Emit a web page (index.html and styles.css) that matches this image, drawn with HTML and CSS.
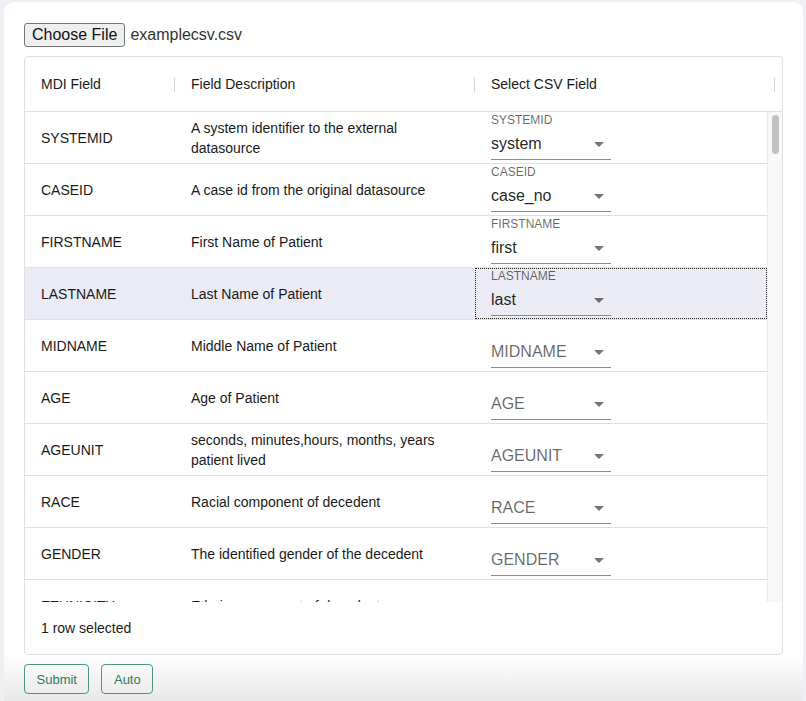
FILE: index.html
```html
<!DOCTYPE html>
<html lang="en">
<head>
<meta charset="utf-8">
<title>CSV Field Mapping</title>
<link rel="stylesheet" href="styles.css">
</head>
<body>
<div class="card">
  <div class="file-row">
    <button class="file-btn" type="button">Choose File</button>
    <span class="file-name">examplecsv.csv</span>
  </div>

  <div class="grid">
    <div class="grid-head">
      <div class="hcell c1"><span>MDI Field</span><span class="sep"></span></div>
      <div class="hcell c2"><span>Field Description</span><span class="sep"></span></div>
      <div class="hcell c3h"><span>Select CSV Field</span><span class="sep"></span></div>
    </div>

    <div class="grid-body">
      <div class="rows">
        <div class="row">
          <div class="cell c1">SYSTEMID</div>
          <div class="cell c2">A system identifier to the external datasource</div>
          <div class="cell c3">
            <div class="sel">
              <div class="sel-label">SYSTEMID</div>
              <div class="sel-box"><span class="val">system</span><svg class="arrow" viewBox="0 0 24 24"><path d="M7 10l5 5 5-5z"/></svg></div>
            </div>
          </div>
        </div>
        <div class="row">
          <div class="cell c1">CASEID</div>
          <div class="cell c2">A case id from the original datasource</div>
          <div class="cell c3">
            <div class="sel">
              <div class="sel-label">CASEID</div>
              <div class="sel-box"><span class="val">case_no</span><svg class="arrow" viewBox="0 0 24 24"><path d="M7 10l5 5 5-5z"/></svg></div>
            </div>
          </div>
        </div>
        <div class="row">
          <div class="cell c1">FIRSTNAME</div>
          <div class="cell c2">First Name of Patient</div>
          <div class="cell c3">
            <div class="sel">
              <div class="sel-label">FIRSTNAME</div>
              <div class="sel-box"><span class="val">first</span><svg class="arrow" viewBox="0 0 24 24"><path d="M7 10l5 5 5-5z"/></svg></div>
            </div>
          </div>
        </div>
        <div class="row selected">
          <div class="cell c1">LASTNAME</div>
          <div class="cell c2">Last Name of Patient</div>
          <div class="cell c3 focused">
            <div class="sel">
              <div class="sel-label">LASTNAME</div>
              <div class="sel-box"><span class="val">last</span><svg class="arrow" viewBox="0 0 24 24"><path d="M7 10l5 5 5-5z"/></svg></div>
            </div>
          </div>
        </div>
        <div class="row">
          <div class="cell c1">MIDNAME</div>
          <div class="cell c2">Middle Name of Patient</div>
          <div class="cell c3">
            <div class="sel">
              <div class="sel-label"></div>
              <div class="sel-box"><span class="ph">MIDNAME</span><svg class="arrow" viewBox="0 0 24 24"><path d="M7 10l5 5 5-5z"/></svg></div>
            </div>
          </div>
        </div>
        <div class="row">
          <div class="cell c1">AGE</div>
          <div class="cell c2">Age of Patient</div>
          <div class="cell c3">
            <div class="sel">
              <div class="sel-label"></div>
              <div class="sel-box"><span class="ph">AGE</span><svg class="arrow" viewBox="0 0 24 24"><path d="M7 10l5 5 5-5z"/></svg></div>
            </div>
          </div>
        </div>
        <div class="row">
          <div class="cell c1">AGEUNIT</div>
          <div class="cell c2">seconds, minutes,hours, months, years patient lived</div>
          <div class="cell c3">
            <div class="sel">
              <div class="sel-label"></div>
              <div class="sel-box"><span class="ph">AGEUNIT</span><svg class="arrow" viewBox="0 0 24 24"><path d="M7 10l5 5 5-5z"/></svg></div>
            </div>
          </div>
        </div>
        <div class="row">
          <div class="cell c1">RACE</div>
          <div class="cell c2">Racial component of decedent</div>
          <div class="cell c3">
            <div class="sel">
              <div class="sel-label"></div>
              <div class="sel-box"><span class="ph">RACE</span><svg class="arrow" viewBox="0 0 24 24"><path d="M7 10l5 5 5-5z"/></svg></div>
            </div>
          </div>
        </div>
        <div class="row">
          <div class="cell c1">GENDER</div>
          <div class="cell c2">The identified gender of the decedent</div>
          <div class="cell c3">
            <div class="sel">
              <div class="sel-label"></div>
              <div class="sel-box"><span class="ph">GENDER</span><svg class="arrow" viewBox="0 0 24 24"><path d="M7 10l5 5 5-5z"/></svg></div>
            </div>
          </div>
        </div>
        <div class="row">
          <div class="cell c1">ETHNICITY</div>
          <div class="cell c2">Ethnic component of decedent</div>
          <div class="cell c3">
            <div class="sel">
              <div class="sel-label"></div>
              <div class="sel-box"><span class="ph">ETHNICITY</span><svg class="arrow" viewBox="0 0 24 24"><path d="M7 10l5 5 5-5z"/></svg></div>
            </div>
          </div>
        </div>
      </div>
      <div class="vscroll"><div class="thumb"></div></div>
    </div>

    <div class="grid-foot">1 row selected</div>
  </div>

  <div class="actions">
    <button class="btn" type="button">Submit</button>
    <button class="btn" type="button">Auto</button>
  </div>
</div>
</body>
</html>
```

FILE: styles.css
```css
* {
  box-sizing: border-box;
}

html, body {
  margin: 0;
  padding: 0;
  height: 100%;
  overflow: hidden;
}

body {
  background: #eef0f6;
  font-family: "Liberation Sans", Arial, Helvetica, sans-serif;
  color: rgba(0, 0, 0, 0.87);
}

.card {
  margin: 2px 0 0 4px;
  width: 799px;
  height: 699px;
  padding: 21px 20px 0 20px;
  border-radius: 10px 10px 0 0;
  background: linear-gradient(to bottom, #ffffff 0, #ffffff 652px, #e8e8e8 699px);
}

.file-row {
  display: flex;
  align-items: center;
  gap: 5px;
  height: 24px;
}

.file-btn {
  height: 24px;
  padding: 0 7px;
  font-family: inherit;
  font-size: 16px;
  color: #111;
  background: #efefef;
  border: 1px solid #767676;
  border-radius: 3px;
}

.file-name {
  font-size: 16px;
  color: #333;
}

.grid {
  margin-top: 9px;
  border: 1px solid #e0e0e0;
  border-radius: 4px;
  font-size: 14px;
  overflow: hidden;
  color: #1a1a1a;
}

.grid-head {
  display: flex;
  height: 55px;
  border-bottom: 1px solid #e0e0e0;
}

.hcell {
  display: flex;
  align-items: center;
  padding: 0 16px;
  flex: none;
}

.hcell.c1 { width: 150px; }
.hcell.c2 { width: 300px; }
.hcell.c3h { width: 300px; }

.sep {
  margin-left: auto;
  margin-right: -16px;
  width: 1px;
  height: 15px;
  background: #d6d6d6;
}

.grid-body {
  display: flex;
  height: 490px;
}

.rows {
  flex: 1;
  overflow: hidden;
}

.row {
  display: flex;
  height: 52px;
  border-bottom: 1px solid #e0e0e0;
}

.row.selected {
  background: #ebebf6;
}

.cell {
  display: flex;
  align-items: center;
  padding: 0 16px;
  line-height: 20px;
  flex: none;
}

.cell.c1 { width: 150px; }
.cell.c2 { width: 300px; }

.cell.c3 {
  flex: 1;
  align-items: flex-start;
  padding-left: 16px;
}

.cell.focused {
  outline: 1px dotted #222;
  outline-offset: -1px;
}

.sel {
  width: 120px;
}

.sel-label {
  height: 16px;
  font-size: 12px;
  line-height: 16px;
  color: rgba(0, 0, 0, 0.6);
}

.sel-box {
  display: flex;
  align-items: center;
  justify-content: space-between;
  height: 32px;
  border-bottom: 1px solid #8c8c8c;
  font-size: 16px;
}

.val {
  color: rgba(0, 0, 0, 0.87);
}

.ph {
  color: rgba(0, 0, 0, 0.6);
}

.arrow {
  width: 24px;
  height: 24px;
  fill: rgba(0, 0, 0, 0.54);
  flex: none;
}

.vscroll {
  width: 15px;
  flex: none;
  background: #f8f8f8;
  border-left: 1px solid #ececec;
}

.thumb {
  width: 7px;
  height: 39px;
  margin: 3px auto 0;
  border-radius: 4px;
  background: #c2c2c2;
}

.grid-foot {
  display: flex;
  align-items: center;
  height: 52px;
  padding: 0 16px;
}

.actions {
  display: flex;
  gap: 12px;
  margin-top: 9px;
}

.btn {
  height: 30px;
  padding: 0 11.5px;
  font-family: inherit;
  font-size: 13px;
  color: #2d7a6a;
  background: transparent;
  border: 1px solid #4f9485;
  border-radius: 4px;
}
```
